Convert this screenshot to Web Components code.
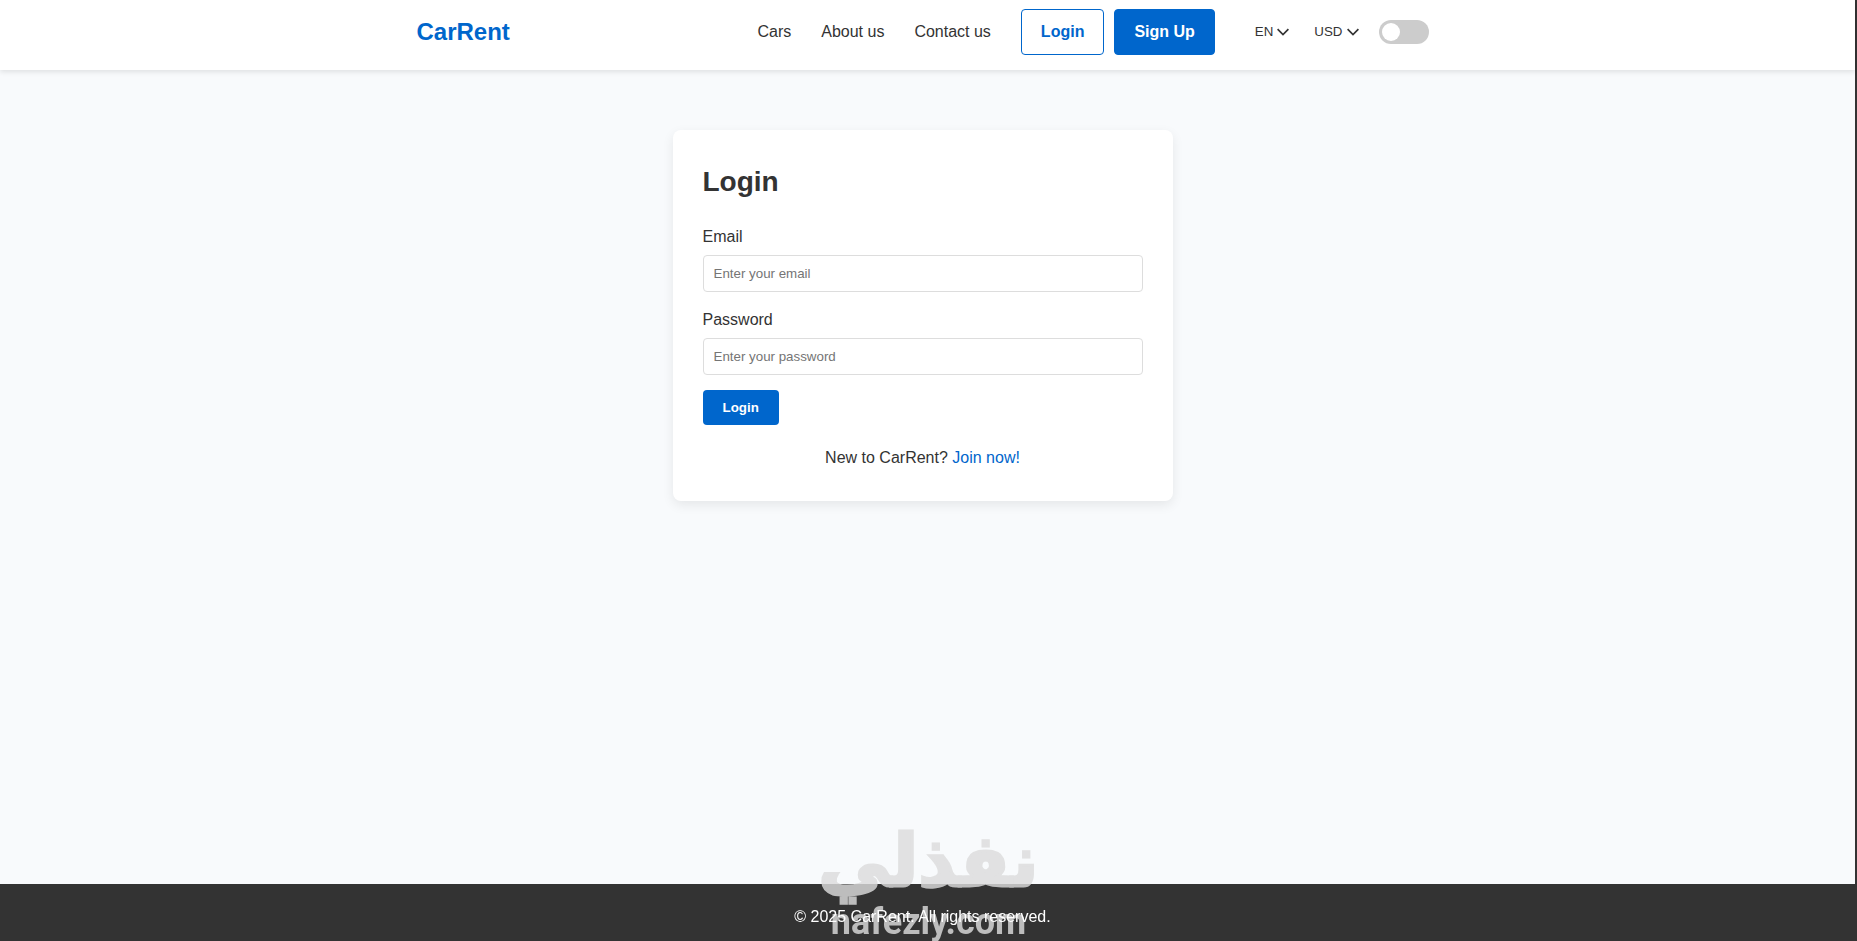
<!DOCTYPE html>
<html lang="en">
<head>
<meta charset="UTF-8">
<meta name="viewport" content="width=device-width, initial-scale=1.0">
<title>CarRent - Login</title>
<style>
  :root {
    --primary: #0066cc;
    --text: #333;
    --gutter: 10px;
  }

  body {
    margin: 0;
    font-family: "Liberation Sans", Arial, sans-serif;
    font-size: 16px;
    line-height: 26px;
    color: var(--text);
    background-color: #f8fafc;
  }
</style>
</head>
<body>
<car-page>
  <car-header slot="header">
    <nav-link href="#cars">Cars</nav-link>
    <nav-link href="#about">About us</nav-link>
    <nav-link href="#contact">Contact us</nav-link>
    <nav-link href="#login" variant="outline">Login</nav-link>
    <nav-link href="#signup" variant="solid">Sign Up</nav-link>
    <pick-list slot="tools" label="Language" options="EN,AR"></pick-list>
    <pick-list slot="tools" label="Currency" options="USD,EUR"></pick-list>
    <theme-switch slot="tools"></theme-switch>
  </car-header>

  <login-card heading="Login">
    <form-field label="Email" type="email" placeholder="Enter your email"></form-field>
    <form-field label="Password" type="password" placeholder="Enter your password"></form-field>
  </login-card>

  <car-footer slot="footer">&copy; 2025 CarRent. All rights reserved.</car-footer>
</car-page>
<site-mark></site-mark>

<script>
function attach(element, html) {
  const template = document.createElement('template');
  template.innerHTML = html;
  element.attachShadow({ mode: 'open' });
  element.shadowRoot.appendChild(template.content.cloneNode(true));
}

class CarPage extends HTMLElement {
  constructor() {
    super();
    attach(this, `
      <style>
        :host {
          display: flex;
          flex-direction: column;
          min-height: 100vh;
          box-sizing: border-box;
          border-right: 2px solid #333;
        }

        main {
          flex: 1;
          padding: 60px 20px;
          padding-right: calc(20px + var(--gutter));
        }
      </style>
      <slot name="header"></slot>
      <main><slot></slot></main>
      <slot name="footer"></slot>
    `);
  }
}

class CarHeader extends HTMLElement {
  constructor() {
    super();
    attach(this, `
      <style>
        :host {
          display: block;
          background-color: white;
          padding: 9px 20px 15px;
          padding-right: calc(20px + var(--gutter));
          box-shadow: 0 2px 5px rgba(0, 0, 0, .1);
        }

        .bar {
          max-width: 1012px;
          margin: 0 auto;
          display: flex;
          align-items: center;
          justify-content: space-between;
        }

        .logo {
          font-size: 24px;
          font-weight: bold;
          color: var(--primary);
          text-decoration: none;
        }

        .right, nav, .tools {
          display: flex;
          align-items: center;
        }

        .right {
          gap: 40px;
        }

        nav {
          gap: 30px;
        }

        .tools {
          gap: 20px;
        }
      </style>
      <div class="bar">
        <a class="logo" href="#">CarRent</a>
        <div class="right">
          <nav><slot></slot></nav>
          <div class="tools"><slot name="tools"></slot></div>
        </div>
      </div>
    `);
  }
}

class NavLink extends HTMLElement {
  constructor() {
    super();
    attach(this, `
      <style>
        :host {
          display: block;
        }

        :host([variant="solid"]) {
          margin-left: -20px;
        }

        a {
          display: block;
          color: var(--text);
          text-decoration: none;
        }

        :host([variant]) a {
          padding: 9px 19px;
          border: 1px solid var(--primary);
          border-radius: 4px;
          font-weight: bold;
          color: var(--primary);
        }

        :host([variant="solid"]) a {
          background-color: var(--primary);
          color: white;
        }
      </style>
      <a><slot></slot></a>
    `);
    this.shadowRoot.querySelector('a').href = this.getAttribute('href');
  }
}

class PickList extends HTMLElement {
  constructor() {
    super();
    attach(this, `
      <style>
        :host {
          display: grid;
          align-items: center;
          padding-right: 5px;
        }

        select, svg {
          grid-area: 1 / 1;
        }

        select {
          appearance: none;
          field-sizing: content;
          border: none;
          margin: 0;
          padding: 4px 16px 6px 0;
          background: transparent;
          font-family: inherit;
          color: var(--text);
        }

        svg {
          justify-self: end;
          pointer-events: none;
        }
      </style>
      <select></select>
      <svg width="12" height="8" viewBox="0 0 12 8" fill="none" stroke="#333" stroke-width="1.7">
        <path d="M.6 1.2l5.4 5.3 5.4-5.3"/>
      </svg>
    `);
    const select = this.shadowRoot.querySelector('select');
    select.setAttribute('aria-label', this.getAttribute('label'));
    this.getAttribute('options').split(',').forEach((name) => {
      select.add(new Option(name));
    });
  }
}

class ThemeSwitch extends HTMLElement {
  constructor() {
    super();
    attach(this, `
      <style>
        :host {
          display: block;
          margin-left: -5px;
        }

        input {
          appearance: none;
          display: flex;
          align-items: center;
          box-sizing: border-box;
          width: 50px;
          height: 24px;
          margin: 0;
          padding: 3px;
          border-radius: 24px;
          background-color: #ccc;
        }

        input::before {
          content: "";
          width: 18px;
          height: 18px;
          border-radius: 50%;
          background-color: white;
        }

        input:checked {
          justify-content: flex-end;
          background-color: var(--primary);
        }
      </style>
      <input type="checkbox" aria-label="Dark mode">
    `);
  }
}

class LoginCard extends HTMLElement {
  constructor() {
    super();
    attach(this, `
      <style>
        :host {
          display: block;
          box-sizing: border-box;
          max-width: 500px;
          margin: 0 auto;
          padding: 30px;
          background-color: white;
          border-radius: 8px;
          box-shadow: 0 4px 12px rgba(0, 0, 0, .08);
        }

        h2 {
          margin: 0 0 20px;
          font-size: 28px;
          line-height: 44px;
        }

        button {
          display: block;
          padding: 10px 20px;
          border: none;
          border-radius: 4px;
          background-color: var(--primary);
          color: white;
          font-family: inherit;
          font-weight: bold;
        }

        p {
          margin: 20px 0 0;
          text-align: center;
        }

        a {
          color: var(--primary);
          text-decoration: none;
        }
      </style>
      <h2></h2>
      <form>
        <slot></slot>
        <button type="button">Login</button>
      </form>
      <p>New to CarRent? <a href="#signup">Join now!</a></p>
    `);
    this.shadowRoot.querySelector('h2').textContent = this.getAttribute('heading');
  }
}

class FormField extends HTMLElement {
  constructor() {
    super();
    attach(this, `
      <style>
        :host {
          display: block;
          margin-bottom: 15px;
        }

        label {
          display: block;
          margin-bottom: 5px;
        }

        input {
          display: block;
          box-sizing: border-box;
          width: 100%;
          height: 37px;
          padding: 10px;
          border: 1px solid #ddd;
          border-radius: 4px;
          background-color: white;
          font-family: inherit;
          color: var(--text);
        }
      </style>
      <label for="field"></label>
      <input id="field">
    `);
    const input = this.shadowRoot.querySelector('input');
    this.shadowRoot.querySelector('label').textContent = this.getAttribute('label');
    input.type = this.getAttribute('type');
    input.placeholder = this.getAttribute('placeholder');
  }
}

class CarFooter extends HTMLElement {
  constructor() {
    super();
    attach(this, `
      <style>
        :host {
          display: block;
          padding: 20px 0 11px;
          padding-right: var(--gutter);
          background-color: #333;
          color: white;
          text-align: center;
        }

        /* keeps the line readable over the brand mark */
        span {
          position: relative;
          z-index: 1;
        }
      </style>
      <span><slot></slot></span>
    `);
  }
}

// translucent brand mark that floats over the bottom of the page
class SiteMark extends HTMLElement {
  constructor() {
    super();
    attach(this, `
      <style>
        :host {
          position: fixed;
          bottom: 0;
          left: 0;
          right: 0;
          display: flex;
          flex-direction: column;
          align-items: center;
          color: #dcdcdc;
          opacity: .82;
          pointer-events: none;
        }

        .ar {
          font-family: "DejaVu Sans", sans-serif;
          font-size: 72px;
          font-weight: bold;
          line-height: 84px;
          -webkit-text-stroke: 3px #dcdcdc;
        }

        .en {
          font-family: Roboto, sans-serif;
          font-size: 36px;
          font-weight: bold;
          line-height: 38px;
        }
      </style>
      <span class="ar" lang="ar" dir="rtl">نفذلي</span>
      <span class="en">nafezly.com</span>
    `);
  }
}

window.customElements.define('car-page', CarPage);
window.customElements.define('car-header', CarHeader);
window.customElements.define('nav-link', NavLink);
window.customElements.define('pick-list', PickList);
window.customElements.define('theme-switch', ThemeSwitch);
window.customElements.define('login-card', LoginCard);
window.customElements.define('form-field', FormField);
window.customElements.define('car-footer', CarFooter);
window.customElements.define('site-mark', SiteMark);
</script>
</body>
</html>
